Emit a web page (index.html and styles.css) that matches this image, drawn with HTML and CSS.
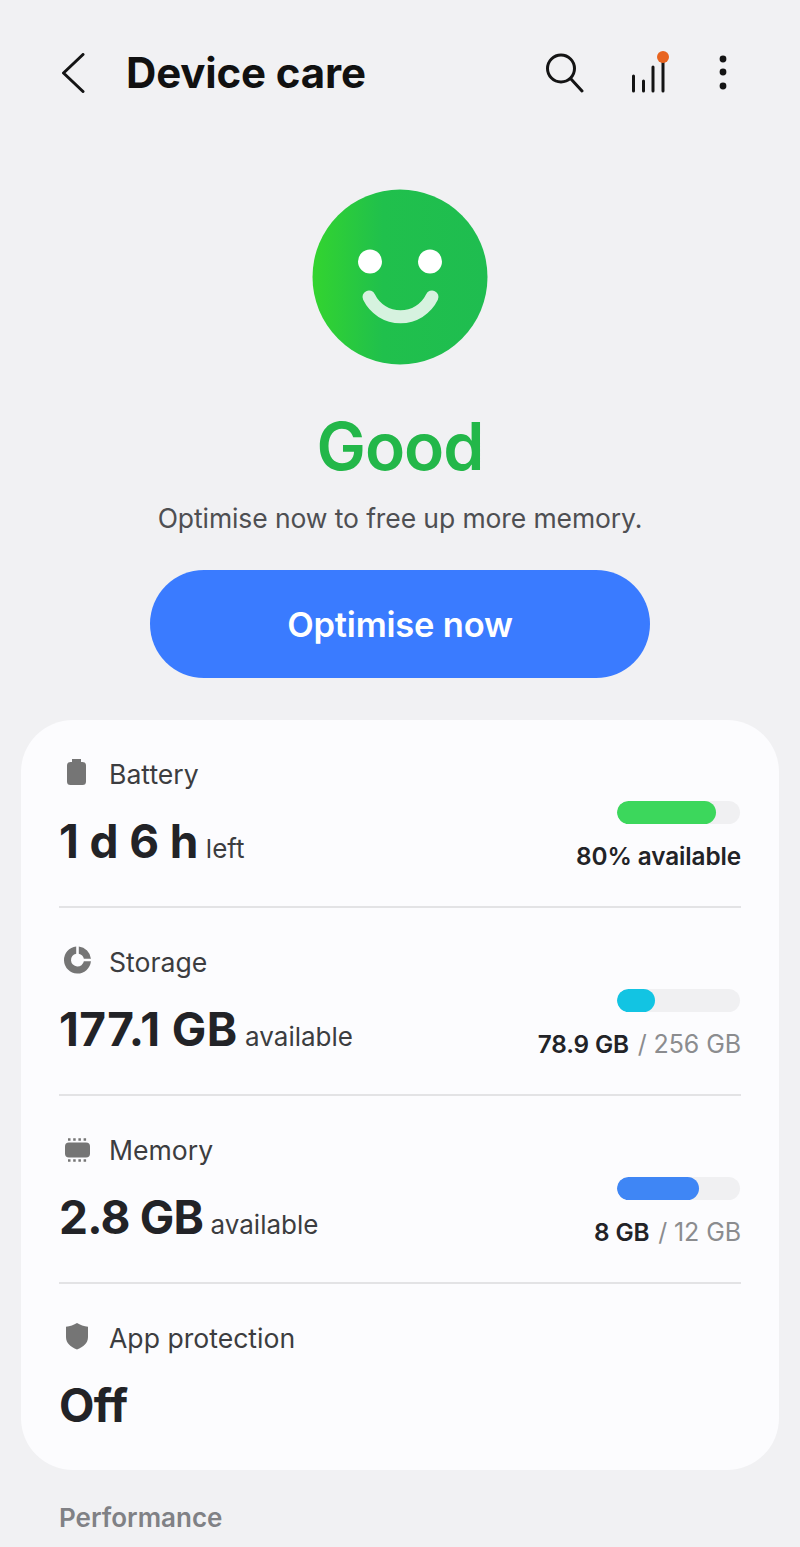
FILE: index.html
```html
<!DOCTYPE html>
<html lang="en">
<head>
<meta charset="utf-8">
<title>Device care</title>
<link rel="stylesheet" href="styles.css">
</head>
<body>
<div class="page">
  <header class="topbar">
    <svg class="back" width="26" height="40" viewBox="0 0 26 40"><path d="M23 1.500 3.500 20 23 38.500" fill="none" stroke="#141414" stroke-width="3" stroke-linecap="round" stroke-linejoin="round"/></svg>
    <h1 class="title">Device care</h1>
    <div class="actions">
      <svg class="ic-search" width="40" height="42" viewBox="0 0 40 42"><circle cx="17" cy="16.500" r="13.500" fill="none" stroke="#141414" stroke-width="3"/><path d="M27 27 38 39" fill="none" stroke="#141414" stroke-width="3" stroke-linecap="round"/></svg>
      <svg class="ic-bars" width="40" height="44" viewBox="0 0 40 44"><g stroke="#141414" stroke-width="3" stroke-linecap="round"><path d="M3.500 26v15"/><path d="M13.500 31v10"/><path d="M23 17v24"/><path d="M33 8v33"/></g><circle cx="33" cy="7" r="6" fill="#e8641f"/></svg>
      <svg class="ic-more" width="10" height="42" viewBox="0 0 10 42"><circle cx="5" cy="7" r="3.400" fill="#141414"/><circle cx="5" cy="20" r="3.400" fill="#141414"/><circle cx="5" cy="34" r="3.400" fill="#141414"/></svg>
    </div>
  </header>

  <section class="hero">
    <svg class="face" width="176" height="176" viewBox="0 0 176 176">
      <defs><linearGradient id="faceGrad" x1="0" y1="0" x2="1" y2="0"><stop offset="0" stop-color="#33d42f"/><stop offset=".4" stop-color="#20c04c"/><stop offset="1" stop-color="#1fbd50"/></linearGradient></defs>
      <circle cx="88" cy="88" r="87.500" fill="url(#faceGrad)"/>
      <circle cx="58" cy="72.500" r="12" fill="#fff"/>
      <circle cx="118" cy="72.500" r="12" fill="#fff"/>
      <path d="M57 108A35 35 0 0 0 120 108" fill="none" stroke="#d6f2df" stroke-width="13" stroke-linecap="round"/>
    </svg>
    <div class="status">Good</div>
    <p class="hint">Optimise now to free up more memory.</p>
    <button class="cta" type="button">Optimise now</button>
  </section>

  <section class="card">
    <div class="row">
      <div class="row-main">
        <div class="label">
          <svg class="ic" width="36" height="36" viewBox="0 0 36 36"><path d="M13 3h9v3h1.500A3.500 3.500 0 0 1 27 9.500v16a3.500 3.500 0 0 1-3.500 3.500h-12A3.500 3.500 0 0 1 8 25.500v-16A3.500 3.500 0 0 1 11.500 6H13z" fill="#757575"/></svg>
          <span>Battery</span>
        </div>
        <div class="value value-time"><b>1 d 6 h</b> <span>left</span></div>
      </div>
      <div class="row-side">
        <div class="track"><div class="fill fill-green" style="width:80.500%"></div></div>
        <div class="meta"><b>80% available</b></div>
      </div>
    </div>
    <div class="row">
      <div class="row-main">
        <div class="label">
          <svg class="ic" width="36" height="36" viewBox="0 0 36 36"><path d="M17.200 2.560A13.500 13.500 0 1 0 31.940 17.300H24.870A6.500 6.500 0 1 1 17.200 9.630Z" fill="#757575"/><path d="M19.800 2.560A13.500 13.500 0 0 1 31.940 14.700H24.870A6.500 6.500 0 0 0 19.800 9.630Z" fill="#757575"/></svg>
          <span>Storage</span>
        </div>
        <div class="value value-wide"><b>177.1 GB</b> <span>available</span></div>
      </div>
      <div class="row-side">
        <div class="track"><div class="fill fill-cyan" style="width:30.500%"></div></div>
        <div class="meta"><b>78.9 GB</b> <i>/ 256 GB</i></div>
      </div>
    </div>
    <div class="row">
      <div class="row-main">
        <div class="label">
          <svg class="ic" width="36" height="36" viewBox="0 0 36 36"><rect x="6" y="10.500" width="25" height="15" rx="4" fill="#757575"/><path d="M9 7.500h19M9 28.500h19" stroke="#757575" stroke-width="2.500" stroke-dasharray="2.500 2.700" fill="none"/></svg>
          <span>Memory</span>
        </div>
        <div class="value value-tight"><b>2.8 GB</b> <span>available</span></div>
      </div>
      <div class="row-side">
        <div class="track"><div class="fill fill-blue" style="width:66.500%"></div></div>
        <div class="meta"><b>8 GB</b> <i>/ 12 GB</i></div>
      </div>
    </div>
    <div class="row">
      <div class="row-main">
        <div class="label">
          <svg class="ic" width="36" height="36" viewBox="0 0 36 36"><path d="M18 3c3 2 7 3.300 11 3.700v10.300c0 6-4.500 10-11 12.500C11.500 27 7 23 7 17V6.700c4-.4 8-1.700 11-3.700z" fill="#757575"/></svg>
          <span>App protection</span>
        </div>
        <div class="value"><b>Off</b></div>
      </div>
    </div>
  </section>

  <h2 class="section-title">Performance</h2>
</div>
</body>
</html>
```
FILE: styles.css
```css
* { box-sizing: border-box; }
html, body { margin: 0; padding: 0; }
body {
  background: #f1f1f3;
  font-family: Inter, "Liberation Sans", sans-serif;
  color: #222327;
  height: 1547px;
  overflow: hidden;
}
.page { width: 800px; display: flex; flex-direction: column; }

.topbar {
  height: 106px;
  padding: 41px 72px 0 60px;
  display: flex;
  align-items: flex-start;
}
.back { flex: none; margin-top: 12px; }
.title {
  margin: 0 0 0 40px;
  font-size: 42px;
  line-height: 64px;
  font-weight: 700;
  letter-spacing: -0.15px;
  color: #111;
  flex: 1;
  height: 64px;
}
.actions { display: flex; align-items: flex-start; }
.ic-search { margin-top: 11px; }
.ic-bars { margin: 9px 0 0 46px; }
.ic-more { margin: 11px 0 0 48px; }

.hero { display: flex; flex-direction: column; align-items: center; }
.face { margin-top: 83px; display: block; }
.status {
  margin-top: 41px;
  font-size: 66px;
  line-height: 80px;
  font-weight: 600;
  color: #23b749;
  letter-spacing: -1px;
}
.hint {
  margin: 14px 0 0;
  font-size: 26.500px;
  line-height: 36px;
  color: #4e4f52;
  letter-spacing: -0.1px;
}
.cta {
  margin-top: 34px;
  width: 500px;
  height: 108px;
  padding: 2px 0 0;
  border: 0;
  border-radius: 54px;
  background: #3a7bff;
  color: #fff;
  font: 600 34.500px/40px Inter, "Liberation Sans", sans-serif;
  letter-spacing: -0.2px;
}

.card {
  margin: 42px 21px 0;
  height: 750px;
  padding: 0 38px;
  background: #fcfcfe;
  border-radius: 52px;
}
.row {
  height: 188px;
  display: flex;
  justify-content: space-between;
  border-bottom: 2px solid #e3e3e5;
}
.row:last-child { border-bottom: 0; }
.row-main { padding-top: 34px; }
.label {
  display: flex;
  align-items: center;
  gap: 14px;
  font-size: 26.600px;
  line-height: 40px;
  color: #3c3d40;
}
.ic { display: block; flex: none; }
.value { margin-top: 17px; line-height: 60px; height: 60px; white-space: nowrap; }
.value b { font-size: 46px; font-weight: 700; color: #222327; letter-spacing: -0.6px; }
.value-time b { letter-spacing: -0.1px; }
.value-wide b { letter-spacing: 0.4px; }
.value-tight b { letter-spacing: -0.8px; }
.value span { font-size: 26px; color: #3c3d40; margin-left: 3px; }

.row-side { padding-top: 81px; display: flex; flex-direction: column; align-items: flex-end; }
.track {
  width: 123px;
  height: 23px;
  margin-right: 1px;
  border-radius: 12px;
  background: #f0f0f2;
  overflow: hidden;
}
.fill { height: 100%; border-radius: 12px; }
.fill-green { background: #3cd75c; }
.fill-cyan { background: #12c4e3; }
.fill-blue { background: #3f86f5; }
.meta { margin-top: 14px; font-size: 24.300px; line-height: 36px; white-space: nowrap; letter-spacing: -0.1px; }
.meta b { font-weight: 600; color: #222327; }
.meta i { font-style: normal; font-size: 25px; color: #8b8c8f; margin-left: 2px; }

.section-title {
  margin: 30px 0 0 59px;
  font-size: 26px;
  line-height: 36px;
  font-weight: 600;
  color: #808185;
}
```
